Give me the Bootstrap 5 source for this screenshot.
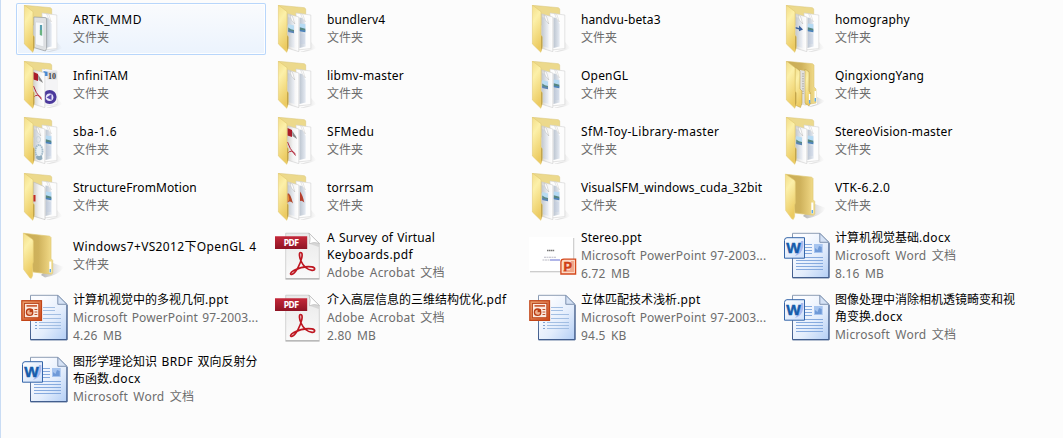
<!DOCTYPE html>
<html lang="zh-CN">
<head>
<meta charset="utf-8">
<meta name="viewport" content="width=device-width, initial-scale=1">
<title>文件夹</title>
<link href="https://cdn.jsdelivr.net/npm/bootstrap@5.3.0/dist/css/bootstrap.min.css" rel="stylesheet">
<style>
  html, body { height: 438px; overflow: hidden; }
  body { background: #fcfcfc; font: 12px/17px "Noto Sans", "Noto Sans CJK SC", sans-serif; color: #000; }
  .explorer { height: 438px; border-left: 1px solid #c9dcf4; padding: 3px 0 0 15px; }
  .file-grid { display: grid; grid-template-columns: repeat(4, 250px); grid-template-rows: repeat(4, 52px) repeat(3, 58px); gap: 4px; }
  .tile { padding-left: 5px; border-radius: 2px; }
  .tile.hot { box-shadow: inset 0 0 0 1px #b8d6fb, inset 0 0 0 2px #fdfeff; background: linear-gradient(#fafbfd, #ebf3fd); }
  .tile svg { width: 48px; height: 48px; flex: none; overflow: visible; }
  .tile-text { margin: -1px 0 0 4px; white-space: nowrap; word-spacing: 1px; }
  .kind { color: #6d6d6d; line-height: 18px; letter-spacing: .2px; word-spacing: 2px; }
  .name + .kind { padding-top: 1px; }
  .kind-ppt { letter-spacing: .14px; word-spacing: 1px; }
  .kind-folder { letter-spacing: 0; }
  .ls-1 { letter-spacing: .1px; }
  .ls-2 { letter-spacing: .2px; }
  .ls-3 { letter-spacing: .35px; }
  .ls-4 { letter-spacing: .48px; }
</style>
</head>
<body>
<svg width="0" height="0" class="position-absolute" aria-hidden="true">
  <defs>
    <linearGradient id="gFlap" x1="0" y1="0" x2="0.3" y2="1"><stop offset="0" stop-color="#f3dd86"/><stop offset=".35" stop-color="#fcf0a9"/><stop offset="1" stop-color="#eccb62"/></linearGradient>
    <linearGradient id="gBack" x1="0" y1="0" x2="1" y2="0"><stop offset="0" stop-color="#c9ac55"/><stop offset=".5" stop-color="#cfb25c"/><stop offset=".8" stop-color="#e6cc78"/><stop offset="1" stop-color="#f3e08f"/></linearGradient>
    <linearGradient id="gPage" x1="0" y1="0" x2="1" y2="0"><stop offset="0" stop-color="#cfcdc8"/><stop offset=".5" stop-color="#f3f3f3"/><stop offset="1" stop-color="#fff"/></linearGradient>
    <linearGradient id="gInner" x1="0" y1="0" x2="1" y2="0"><stop offset="0" stop-color="#bcc5d0"/><stop offset="1" stop-color="#e6ebf3"/></linearGradient>
    <linearGradient id="gShade" x1="0" y1="0" x2="1" y2="0"><stop offset="0" stop-color="#777" stop-opacity=".55"/><stop offset="1" stop-color="#999" stop-opacity="0"/></linearGradient>
    <linearGradient id="gDoc" x1="0" y1="0" x2="1" y2="1"><stop offset=".2" stop-color="#fbfcff"/><stop offset=".6" stop-color="#e3edfc"/><stop offset="1" stop-color="#b3cef5"/></linearGradient>
    <linearGradient id="gDocEdge" x1="0" y1="0" x2="0" y2="1"><stop offset="0" stop-color="#8d9db4"/><stop offset="1" stop-color="#3e5a8c"/></linearGradient>
    <linearGradient id="gPdf" x1="0" y1="0" x2="0" y2="1"><stop offset="0" stop-color="#c5283a"/><stop offset="1" stop-color="#8e1424"/></linearGradient>
    <linearGradient id="gPdfPage" x1="0" y1="0" x2="0" y2="1"><stop offset="0" stop-color="#e9e9e9"/><stop offset="1" stop-color="#fafafa"/></linearGradient>
    <linearGradient id="gOrange" x1="0" y1="0" x2="1" y2="1"><stop offset="0" stop-color="#e9a06f"/><stop offset="1" stop-color="#cf4a1c"/></linearGradient>
    <linearGradient id="gWord" x1="0" y1="0" x2="1" y2="1"><stop offset="0" stop-color="#fff"/><stop offset="1" stop-color="#cddffa"/></linearGradient>

    <symbol id="folderBack" viewBox="0 0 48 48">
      <path d="M25 47L36 44V37L41.5 43Q36 46.5 25 47Z" fill="url(#gShade)" opacity=".7"/>
      <path d="M3.5 .3L29.5 2.7L30.7 4V20H12Z" fill="#ecd98c" stroke="#d9c478" stroke-width=".5"/>
      <path d="M21 8L35.8 10V43.6L22 45Z" fill="#fdfdfd" stroke="#d2d2d2" stroke-width=".6"/>
      <path d="M24.5 12.5L27.5 13L30.7 19V41.5L24.5 43Z" fill="url(#gInner)"/>
      <path d="M25.5 8.7L27.8 9.5L30.3 17L27.6 13.4Z" fill="#fff" stroke="#bdbdbd" stroke-width=".4"/>
    </symbol>
    <symbol id="folderPage" viewBox="0 0 48 48">
      <path d="M12.5 8.8L23.8 12V46.6L12 43Z" fill="url(#gPage)" stroke="#c4c4c4" stroke-width=".5"/>
      <path d="M13 12L16.5 13L19.5 20V43L13 41Z" fill="url(#gInner)" opacity=".65"/>
      <path d="M15 10L17.5 11.5L19.8 19L16.5 15Z" fill="#fff" stroke="#aaa" stroke-width=".4"/>
    </symbol>
    <symbol id="folderFlap" viewBox="0 0 48 48">
      <path d="M3.4 0L12 6.7V30L13.2 31.5V43L11.8 47.3L3.4 39Z" fill="url(#gFlap)" stroke="#dfc568" stroke-width=".5"/>
      <path d="M12.2 30.5L13.2 32V42L12.2 46Z" fill="#b99b45"/>
    </symbol>
    <symbol id="landFront" viewBox="0 0 48 48">
      <path d="M13.2 19L19 20.6V28L13.2 26.5Z" fill="#b9dcf2"/><path d="M13.2 22.6L16 24.3L19 25V27.2L13.2 26Z" fill="#5c8a84"/><path d="M13.2 25L19 26.4V28.2L13.2 27Z" fill="#5a84b5"/>
    </symbol>
    <symbol id="landRear" viewBox="0 0 48 48">
      <path d="M24.8 18.5L30.3 19.2V27L24.8 26Z" fill="#b5daf3"/><path d="M24.8 22.3L30.3 23.8V26L24.8 25.2Z" fill="#568680"/><path d="M24.8 24.8L30.3 25.5V27.2L24.8 26.3Z" fill="#4a80ba"/>
      <path d="M25 30H30M25 32H30M25 34H30M25 36H30M25 38H30" stroke="#bccbe1" stroke-width=".6"/>
    </symbol>
    <symbol id="pdfFront" viewBox="0 0 48 48">
      <path d="M12.5 8.8L23.8 12V46.6L12 43Z" fill="url(#gPage)" stroke="#c4c4c4" stroke-width=".5"/>
      <path d="M12.5 11L17 13V20L12.5 18.5Z" fill="#a91d29"/><path d="M17 13.5L21 19.5L22 22L17.5 19Z" fill="#8a8a8a"/>
      <path d="M12.5 25Q14 31 20.5 38.5M13 36Q16 32 20.5 37" fill="none" stroke="#b4273a" stroke-width="1"/>
    </symbol>

    <symbol id="fDocs" viewBox="0 0 48 48"><use href="#folderBack"/><use href="#folderPage"/><use href="#folderFlap"/></symbol>
    <symbol id="fPics" viewBox="0 0 48 48"><use href="#folderBack"/><use href="#landRear"/><use href="#folderPage"/><use href="#landFront"/><use href="#folderFlap"/></symbol>
    <symbol id="fArtk" viewBox="0 0 48 48">
      <use href="#folderBack"/>
      <path d="M12.8 12L24.6 12.6L25.6 14V43.5L24.4 46L12.8 42.5Z" fill="#dfe1e3" stroke="#94999d" stroke-width=".7"/>
      <path d="M14.5 17L22.8 17.5V42L14.5 39.5Z" fill="#f6f8fa" stroke="#c8ccd0" stroke-width=".5"/>
      <path d="M18.9 20H21.1V30.5L18.9 30Z" fill="#5a9fb0"/><path d="M18.9 25H21.1V30.5L18.9 30Z" fill="#6ab381"/>
      <use href="#folderFlap"/>
    </symbol>
    <symbol id="fInfini" viewBox="0 0 48 48">
      <use href="#folderBack"/>
      <path d="M24 8L36 10V43L24 45Z" fill="#f4f4f6"/><path d="M22.5 10L27.5 11V15L22.5 15Z" fill="#4788d2"/>
      <rect x="26.5" y="10.5" width="9.3" height="8" fill="#dcdcdc"/>
      <text x="27" y="17.6" font-family="Liberation Serif, serif" font-size="8" font-weight="700" fill="#444">10</text>
      <circle cx="28.6" cy="36" r="7" fill="#4b399c"/><circle cx="28.6" cy="36.3" r="3.8" fill="#e9e6fa"/><path d="M25.5 36.5L30.5 33V39Z" fill="#5a49ae"/>
      <use href="#pdfFront"/>
      <use href="#folderFlap"/>
    </symbol>
    <symbol id="fHomo" viewBox="0 0 48 48">
      <use href="#folderBack"/><use href="#landRear"/><use href="#folderPage"/>
      <path d="M12.6 22L16 22.9V20.5L20 24.5L16 26.3V24.5L12.6 23.6Z" fill="#3a619f"/>
      <use href="#folderFlap"/>
    </symbol>
    <symbol id="fNested" viewBox="0 0 48 48">
      <path d="M25 46L34 43V36L42 40Q36 45 25 46Z" fill="url(#gShade)"/>
      <path d="M3.5 .3L29.5 2.7L31 4V26L33 28V42L22 44L12 40Z" fill="url(#gBack)" stroke="#d6bd66" stroke-width=".5"/>
      <path d="M17 9L22.5 10V44L17 44Z" fill="#e2e1de"/><path d="M20 12V33" stroke="#a29e97" stroke-dasharray="1.5 1"/>
      <path d="M12 6L17 10V28L19 30V42L17.5 46.5L12 44Z" fill="url(#gFlap)" stroke="#b59a46" stroke-width=".5"/>
      <path d="M22 8L26 11V30L27.5 32V42L26 45L22 42Z" fill="url(#gFlap)" stroke="#b59a46" stroke-width=".5"/>
      <path d="M26.6 33V42M32.3 30V40" stroke="#fff" stroke-width="1.5"/><path d="M26.6 39V42.5M32.3 37V40.5" stroke="#61a9e8" stroke-width="1.4"/>
      <use href="#folderFlap"/>
    </symbol>
    <symbol id="fSba" viewBox="0 0 48 48">
      <use href="#folderBack"/><use href="#landRear"/><use href="#folderPage"/>
      <ellipse cx="18" cy="34" rx="3.6" ry="6" fill="#e6eff4" stroke="#a5bccb" stroke-width="1.8" stroke-dasharray="1.6 .5"/>
      <path d="M15 41Q18 45 21.5 42L21 39H15.5Z" fill="#8fabbc"/><ellipse cx="17.3" cy="22.5" rx="2.2" ry="3" fill="none" stroke="#c8d4da" stroke-width="1"/>
      <use href="#folderFlap"/>
    </symbol>
    <symbol id="fSfmedu" viewBox="0 0 48 48"><use href="#folderBack"/><use href="#pdfFront"/><use href="#folderFlap"/></symbol>
    <symbol id="fStruct" viewBox="0 0 48 48">
      <use href="#folderBack"/><use href="#landRear"/>
      <path d="M12.5 9L23 13.5L24 15V46.6L12 43Z" fill="url(#gPage)" stroke="#bbb" stroke-width=".6"/><path d="M12.3 22H14.5V28.5H12.3Z" fill="#c22a22"/>
      <use href="#folderFlap"/>
    </symbol>
    <symbol id="fTorr" viewBox="0 0 48 48">
      <use href="#folderBack"/><path d="M25 18.5Q27.3 21 29.3 29.5Q27 27 25 28Z" fill="#b5402f"/>
      <use href="#folderPage"/><path d="M12.5 20.5Q15 19 18 30.5Q15 27 12.5 30Z" fill="#b2492c"/><path d="M12.5 21Q14 22 14.3 27L12.5 29.5Z" fill="#e58c35"/>
      <use href="#folderFlap"/>
    </symbol>
    <symbol id="fOpen" viewBox="0 0 48 48">
      <path d="M20 43L32 31L43 35Q38 43 24 45.5Z" fill="url(#gShade)"/>
      <path d="M3 1.3L28.7 4.2L30 5.5V26.5L31.7 28.5V41L30.5 42.2L12 40Z" fill="url(#gBack)" stroke="#dfc874" stroke-width=".7"/>
      <path d="M29.3 29.5V40.5" stroke="#fff" stroke-width="2"/><path d="M29.3 37V40.3" stroke="#5ca8ea" stroke-width="1.4"/>
      <path d="M2.4 1L11.7 7.4L12.3 9V30L11.6 32V43.5L10.4 46.3L9 46L2.7 37.5Z" fill="url(#gFlap)" stroke="#e5cd73" stroke-width=".6"/>
    </symbol>

    <symbol id="officePage" viewBox="0 0 48 48">
      <path d="M9.5 1.3H36.8L45.8 10.3V45.5H9.5Z" fill="url(#gDoc)" stroke="url(#gDocEdge)" stroke-width="1"/>
      <path d="M46.1 11V45.9H9.5" fill="none" stroke="#45618f" stroke-width="1"/>
      <path d="M36.8 1.3V10.3H45.8Z" fill="#d5e2f5" stroke="#7489a8" stroke-width=".9"/>
    </symbol>
    <symbol id="pptDoc" viewBox="0 0 48 48">
      <use href="#officePage"/>
      <path d="M22 13.5H34M22 16.5H34M22 20.5H40M22 24.5H40M18 28.5H40M18 31.5H40M18 34.5H40" stroke="#9bb9e0" stroke-width=".9"/>
      <path d="M14 28.5H16M14 31.5H16M14 34.5H16" stroke="#7fa2d2"/>
      <rect x=".8" y="6.7" width="19.7" height="19.7" fill="url(#gOrange)" stroke="#c24517" stroke-width="1.2"/>
      <rect x="3.5" y="9.5" width="14.3" height="14.2" fill="#fbeadf" stroke="#b8461d" stroke-width=".9"/>
      <path d="M5.5 11.9H16" stroke="#c6481c" stroke-width="1.5"/><circle cx="8.6" cy="18.2" r="3.2" fill="#efb18f" stroke="#b93d13" stroke-width="1.3"/><path d="M8.6 18.2V15H11.8V18.2Z" fill="#b93d13"/>
      <path d="M13.5 15.5H16.3M13.5 18H16.3M13.5 20.5H16.3" stroke="#c0532b"/>
    </symbol>
    <symbol id="wordDoc" viewBox="0 0 48 48">
      <use href="#officePage"/>
      <path d="M22 12.5H29M22 15.5H29M22 18.5H29M22 21.5H29M13 25.5H40M13 28.5H40M13 31.5H40M13 34.5H40M13 37.5H40" stroke="#86aade" stroke-width="1"/>
      <rect x="31" y="12" width="8.7" height="9" fill="#a6c4ef"/><path d="M32 19V16L34.5 18L36 14L38.7 15V20H32Z" fill="#6f9ad8"/>
      <path d="M4 5.7H21.5V26.2H1.5V8.5Q1.5 5.7 4 5.7Z" fill="url(#gWord)" stroke="#3465a9" stroke-width="1"/>
      <path d="M18 9H20.3V14Q19 22 12 24Q17 18 18 9Z" fill="#aab9ee"/>
      <text x="3.3" y="20.6" font-family="Liberation Sans, sans-serif" font-size="15.5" font-weight="700" fill="#155cab" stroke="#155cab" stroke-width=".5" textLength="14.5" lengthAdjust="spacingAndGlyphs">W</text>
    </symbol>
    <symbol id="pdfDoc" viewBox="0 0 48 48">
      <path d="M10.7 1.2H34L44.3 11.5V46.5H10.7Z" fill="url(#gPdfPage)" stroke="#c9c9c9" stroke-width=".8"/>
      <path d="M10.5 47H44.5" stroke="#989898" stroke-width=".9"/>
      <path d="M34 1.2Q36 6 34.5 11.8Q39 9.5 44.3 11.5Z" fill="#fff" stroke="#aaa" stroke-width=".6"/><path d="M34.5 11.8Q39 9.5 44.3 11.5L43.8 15Z" fill="#ccc" opacity=".7"/>
      <path d="M0 4.2H32.2V17H0Z" fill="url(#gPdf)"/>
      <text x="8.7" y="13.7" font-family="DejaVu Sans Condensed, DejaVu Sans, sans-serif" font-size="8.2" font-weight="700" fill="#fff" textLength="15.5" lengthAdjust="spacing">PDF</text>
      <path d="M25.8 20.5C23.8 20.2 24.2 25 26 29C28.2 34 32.5 37.7 37 38.3C40.5 38.6 40.6 35.3 36.8 34.9C31.5 34.3 23.5 36 18.8 38.4C14.8 40.5 14.8 43.2 17.2 42.3C20.8 40.8 25.8 31.5 26.9 25.2C27.4 22.2 27 20.5 25.8 20.5Z" fill="none" stroke="#be1621" stroke-width="1.7"/>
    </symbol>
    <symbol id="pptThumb" viewBox="0 0 48 48">
      <path d="M1 6H45.2V40.2H1Z" fill="#bdbdbd"/><path d="M-.7 5H44.3V39.2H-.7Z" fill="#fff"/>
      <path d="M18 18.5H25.5" stroke="#777" stroke-width="1.3" stroke-dasharray="1.5 .4"/><path d="M15 25.3H27M13.5 28H21" stroke="#bcbcc6" stroke-width="1.1" stroke-dasharray="2 .5"/><path d="M21 28H31" stroke="#8f96df" stroke-width="1.4"/>
      <path d="M35 27.2H46.6V42H31.9V30Q31.9 27.2 35 27.2Z" fill="#fbd9c6" stroke="#d4481c" stroke-width="1.3"/>
      <path d="M42 29H45V40H34V38H41Z" fill="#f1a88a"/>
      <text x="34.6" y="38.8" font-family="Liberation Sans, sans-serif" font-size="12.5" font-weight="700" fill="#cf3f12" stroke="#cf3f12" stroke-width=".5">P</text>
    </symbol>
  </defs>
</svg>

<main class="explorer">
  <div class="file-grid">
    <div class="tile hot d-flex align-items-center"><svg><use href="#fArtk"/></svg><div class="tile-text"><div class="name ls-4">ARTK_MMD</div><div class="kind kind-folder">文件夹</div></div></div>
    <div class="tile d-flex align-items-center"><svg><use href="#fPics"/></svg><div class="tile-text"><div class="name ls-1">bundlerv4</div><div class="kind kind-folder">文件夹</div></div></div>
    <div class="tile d-flex align-items-center"><svg><use href="#fDocs"/></svg><div class="tile-text"><div class="name ls-1">handvu-beta3</div><div class="kind kind-folder">文件夹</div></div></div>
    <div class="tile d-flex align-items-center"><svg><use href="#fHomo"/></svg><div class="tile-text"><div class="name ls-2">homography</div><div class="kind kind-folder">文件夹</div></div></div>

    <div class="tile d-flex align-items-center"><svg><use href="#fInfini"/></svg><div class="tile-text"><div class="name ls-2">InfiniTAM</div><div class="kind kind-folder">文件夹</div></div></div>
    <div class="tile d-flex align-items-center"><svg><use href="#fDocs"/></svg><div class="tile-text"><div class="name ls-2">libmv-master</div><div class="kind kind-folder">文件夹</div></div></div>
    <div class="tile d-flex align-items-center"><svg><use href="#fPics"/></svg><div class="tile-text"><div class="name ls-2">OpenGL</div><div class="kind kind-folder">文件夹</div></div></div>
    <div class="tile d-flex align-items-center"><svg><use href="#fNested"/></svg><div class="tile-text"><div class="name ls-2">QingxiongYang</div><div class="kind kind-folder">文件夹</div></div></div>

    <div class="tile d-flex align-items-center"><svg><use href="#fSba"/></svg><div class="tile-text"><div class="name ls-4">sba-1.6</div><div class="kind kind-folder">文件夹</div></div></div>
    <div class="tile d-flex align-items-center"><svg><use href="#fSfmedu"/></svg><div class="tile-text"><div class="name ls-3">SFMedu</div><div class="kind kind-folder">文件夹</div></div></div>
    <div class="tile d-flex align-items-center"><svg><use href="#fDocs"/></svg><div class="tile-text"><div class="name ls-3">SfM-Toy-Library-master</div><div class="kind kind-folder">文件夹</div></div></div>
    <div class="tile d-flex align-items-center"><svg><use href="#fPics"/></svg><div class="tile-text"><div class="name ls-2">StereoVision-master</div><div class="kind kind-folder">文件夹</div></div></div>

    <div class="tile d-flex align-items-center"><svg><use href="#fStruct"/></svg><div class="tile-text"><div class="name ls-1">StructureFromMotion</div><div class="kind kind-folder">文件夹</div></div></div>
    <div class="tile d-flex align-items-center"><svg><use href="#fTorr"/></svg><div class="tile-text"><div class="name ls-2">torrsam</div><div class="kind kind-folder">文件夹</div></div></div>
    <div class="tile d-flex align-items-center"><svg><use href="#fPics"/></svg><div class="tile-text"><div class="name ls-1">VisualSFM_windows_cuda_32bit</div><div class="kind kind-folder">文件夹</div></div></div>
    <div class="tile d-flex align-items-center"><svg><use href="#fOpen"/></svg><div class="tile-text"><div class="name ls-3">VTK-6.2.0</div><div class="kind kind-folder">文件夹</div></div></div>

    <div class="tile d-flex align-items-center"><svg><use href="#fOpen"/></svg><div class="tile-text"><div class="name ls-3">Windows7+VS2012下OpenGL 4</div><div class="kind kind-folder">文件夹</div></div></div>
    <div class="tile d-flex align-items-center"><svg><use href="#pdfDoc"/></svg><div class="tile-text"><div class="name ls-1">A Survey of Virtual<br><span class="ls-3">Keyboards.pdf</span></div><div class="kind">Adobe Acrobat 文档</div></div></div>
    <div class="tile d-flex align-items-center"><svg><use href="#pptThumb"/></svg><div class="tile-text"><div class="name ls-2">Stereo.ppt</div><div class="kind kind-ppt">Microsoft PowerPoint 97-2003...</div><div class="kind">6.72 MB</div></div></div>
    <div class="tile d-flex align-items-center"><svg><use href="#wordDoc"/></svg><div class="tile-text"><div class="name">计算机视觉基础<span class="ls-3">.docx</span></div><div class="kind">Microsoft Word 文档</div><div class="kind">8.16 MB</div></div></div>

    <div class="tile d-flex align-items-center"><svg><use href="#pptDoc"/></svg><div class="tile-text"><div class="name">计算机视觉中的多视几何<span class="ls-3">.ppt</span></div><div class="kind kind-ppt">Microsoft PowerPoint 97-2003...</div><div class="kind">4.26 MB</div></div></div>
    <div class="tile d-flex align-items-center"><svg><use href="#pdfDoc"/></svg><div class="tile-text"><div class="name">介入高层信息的三维结构优化<span class="ls-3">.pdf</span></div><div class="kind">Adobe Acrobat 文档</div><div class="kind">2.80 MB</div></div></div>
    <div class="tile d-flex align-items-center"><svg><use href="#pptDoc"/></svg><div class="tile-text"><div class="name">立体匹配技术浅析<span class="ls-3">.ppt</span></div><div class="kind kind-ppt">Microsoft PowerPoint 97-2003...</div><div class="kind">94.5 KB</div></div></div>
    <div class="tile d-flex align-items-center"><svg><use href="#wordDoc"/></svg><div class="tile-text"><div class="name">图像处理中消除相机透镜畸变和视<br>角变换<span class="ls-3">.docx</span></div><div class="kind">Microsoft Word 文档</div></div></div>

    <div class="tile d-flex align-items-center"><svg><use href="#wordDoc"/></svg><div class="tile-text"><div class="name">图形学理论知识<span class="ls-3"> BRDF </span>双向反射分<br>布函数<span class="ls-3">.docx</span></div><div class="kind">Microsoft Word 文档</div></div></div>
  </div>
</main>
<script src="https://cdn.jsdelivr.net/npm/bootstrap@5.3.0/dist/js/bootstrap.bundle.min.js"></script>
</body>
</html>
